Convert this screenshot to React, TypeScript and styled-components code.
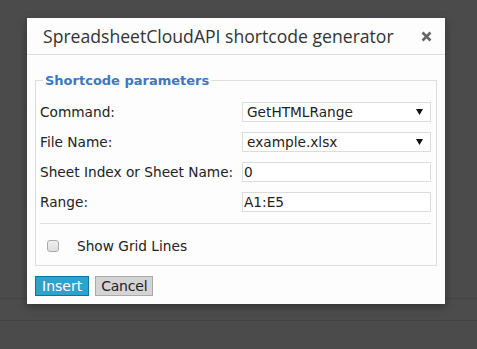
import React from 'react';
import styled, { createGlobalStyle } from 'styled-components';

const GlobalStyle = createGlobalStyle`
  html, body {
    margin: 0;
    padding: 0;
    background: #4b4b4b;
  }
  body {
    font-family: 'DejaVu Sans', Verdana, sans-serif;
  }
`;

const rows = [
  { label: 'Command:', value: 'GetHTMLRange', select: true },
  { label: 'File Name:', value: 'example.xlsx', select: true },
  { label: 'Sheet Index or Sheet Name:', value: '0', select: false },
  { label: 'Range:', value: 'A1:E5', select: false },
];

const App = () => {
  return (
    <Backdrop>
      <GlobalStyle />
      <PageStrip />
      <Dialog>
        <Header>
          <Title>SpreadsheetCloudAPI shortcode generator</Title>
          <CloseButton aria-label='close'>
            <svg width='11' height='11' viewBox='0 0 11 11'>
              <path d='M1.5 1.5 L9.5 9.5 M9.5 1.5 L1.5 9.5' stroke='#666' strokeWidth='2.6' strokeLinecap='butt' />
            </svg>
          </CloseButton>
        </Header>
        <Body>
          <Fieldset>
            <Legend>Shortcode parameters</Legend>
            <FormGrid>
              {rows.map((row) => (
                <React.Fragment key={row.label}>
                  <Label>{row.label}</Label>
                  {row.select ? (
                    <SelectBox>
                      <span>{row.value}</span>
                      <svg width='7' height='6' viewBox='0 0 7 6'>
                        <path d='M0 0 H7 L3.5 6 Z' fill='#111' />
                      </svg>
                    </SelectBox>
                  ) : (
                    <TextInput defaultValue={row.value} />
                  )}
                </React.Fragment>
              ))}
            </FormGrid>
            <Separator />
            <CheckRow>
              <CheckBox />
              <CheckLabel>Show Grid Lines</CheckLabel>
            </CheckRow>
          </Fieldset>
          <Actions>
            <Button $primary>Insert</Button>
            <Button>Cancel</Button>
          </Actions>
        </Body>
      </Dialog>
    </Backdrop>
  );
};

export default App;

const Backdrop = styled.div`
  position: relative;
  width: 477px;
  height: 349px;
  overflow: hidden;
  background: #4b4b4b;
  padding-top: 298px;
  box-sizing: border-box;
`;

const PageStrip = styled.div`
  height: 21px;
  border-top: 1px solid #434343;
  border-bottom: 1px solid #434343;
  background: #4c4c4c;
`;

const Dialog = styled.div`
  position: absolute;
  left: 27px;
  top: 18px;
  width: 418px;
  background: #fdfdfd;
  box-shadow: 0 3px 8px rgba(0, 0, 0, 0.35);
`;

const Header = styled.div`
  display: flex;
  align-items: center;
  justify-content: space-between;
  height: 36px;
  padding: 0 13px 0 16px;
  border-bottom: 1px solid #dcdcdc;
`;

const Title = styled.div`
  font-family: 'Open Sans', 'Noto Sans', sans-serif;
  font-size: 17.6px;
  color: #333;
`;

const CloseButton = styled.div`
  display: flex;
  align-items: center;
  margin-top: 1px;
`;

const Body = styled.div`
  padding: 18px 8px 8px 8px;
`;

const Fieldset = styled.fieldset`
  margin: 0;
  padding: 14px 5px 0 4px;
  border: 1px solid #dddddd;
`;

const Legend = styled.legend`
  padding: 0 2px;
  margin-left: 3px;
  font-size: 13px;
  font-weight: bold;
  color: #3b78c0;
`;

const FormGrid = styled.div`
  display: grid;
  grid-template-columns: 202px 1fr;
  row-gap: 10px;
  align-items: center;
`;

const Label = styled.label`
  font-size: 13.7px;
  color: #222;
`;

const SelectBox = styled.div`
  display: flex;
  align-items: center;
  justify-content: space-between;
  height: 20px;
  box-sizing: border-box;
  padding: 0 7px 0 4px;
  border: 1px solid #dcdcdc;
  background: #fff;
  font-size: 13.7px;
  color: #222;
`;

const TextInput = styled.input`
  height: 20px;
  box-sizing: border-box;
  padding: 0 1px;
  border: 1px solid #dcdcdc;
  background: #fff;
  font-family: 'DejaVu Sans', Verdana, sans-serif;
  font-size: 13.7px;
  color: #222;
  outline: none;
`;

const Separator = styled.div`
  height: 1px;
  margin: 11px 0 0 0;
  background: #dddddd;
`;

const CheckRow = styled.div`
  display: flex;
  align-items: center;
  height: 41px;
  padding-left: 7px;
  box-sizing: border-box;
  padding-top: 3px;
`;

const CheckBox = styled.span`
  width: 12px;
  height: 12px;
  box-sizing: border-box;
  border: 1px solid #aaa;
  border-radius: 3px;
  background: linear-gradient(#f0f0f0, #dedede);
`;

const CheckLabel = styled.span`
  margin-left: 18px;
  font-size: 13.7px;
  color: #222;
`;

const Actions = styled.div`
  display: flex;
  gap: 6px;
  margin-top: 10px;
`;

const Button = styled.button<{ $primary?: boolean }>`
  height: 20px;
  padding: 0 ${(p) => (p.$primary ? '6px' : '5px')};
  font-family: 'DejaVu Sans', Verdana, sans-serif;
  font-size: 14px;
  line-height: 18px;
  letter-spacing: ${(p) => (p.$primary ? '0' : '-0.2px')};
  border: 1px solid ${(p) => (p.$primary ? '#0b74a0' : '#aaaaaa')};
  background: ${(p) => (p.$primary ? '#2ea2cc' : '#d4d4d4')};
  color: ${(p) => (p.$primary ? '#fff' : '#222')};
  border-radius: 0;
`;
